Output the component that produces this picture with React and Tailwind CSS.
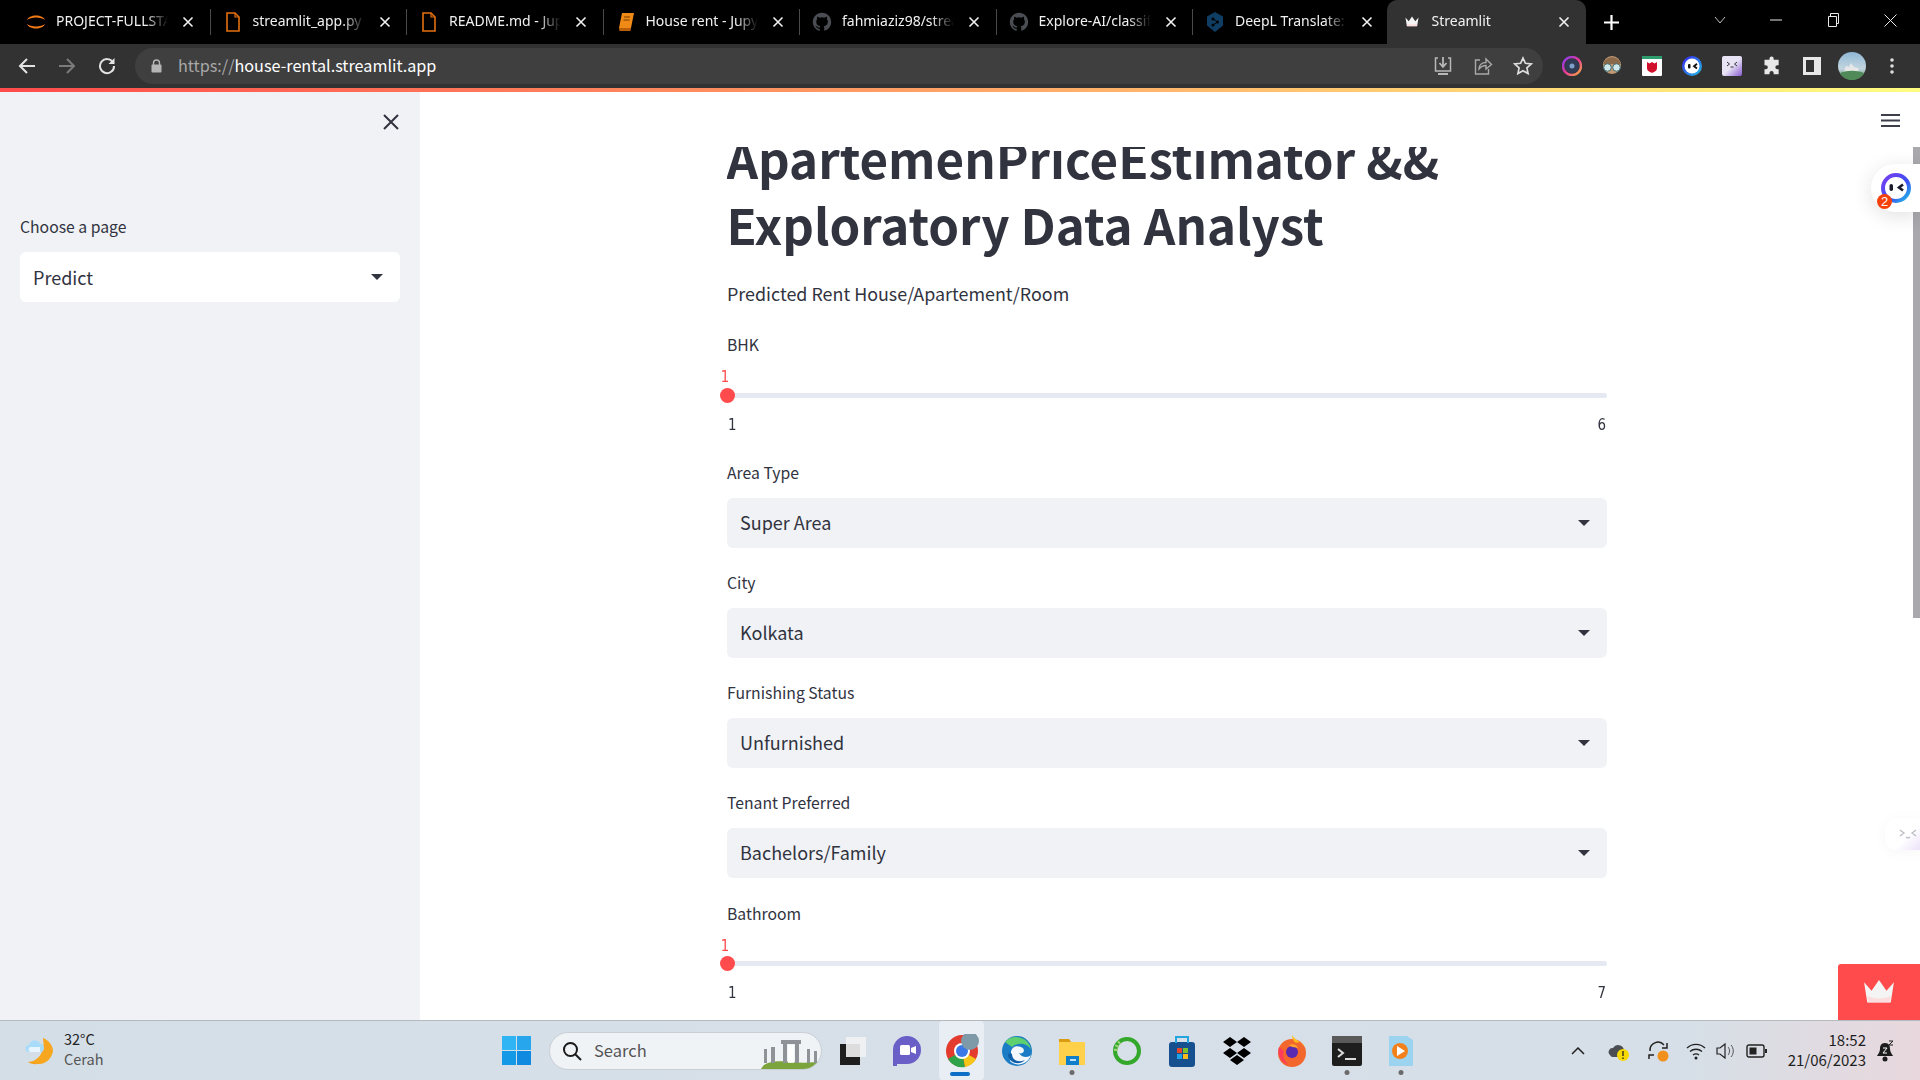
import React from "react";

const sans = "[font-family:'Noto_Sans_CJK_SC','Noto_Sans',sans-serif]";

function Tab({ icon, title, active, sep }) {
  return (
    <div className={"relative h-[44px] shrink-0 flex items-center pr-[12px] " + (active ? "bg-[#323232] rounded-t-[10px] w-[199px] ml-[-3px] pl-[15px]" : "w-[196.5px] pl-[12px]")}>
      <div className="w-[20px] h-[20px] flex items-center justify-center shrink-0">{icon}</div>
      <div className="ml-[10px] w-[112px] overflow-hidden whitespace-nowrap text-[14px] leading-[20px] mb-[2px] text-[#f1f1f1] font-['Noto_Sans'] [mask-image:linear-gradient(to_right,black_80%,transparent)]">{title}</div>
      <svg className="ml-[14px] shrink-0" width="12" height="12" viewBox="0 0 12 12"><path d="M1.500 1.500 10.500 10.500M10.500 1.500 1.500 10.500" stroke="#f2f2f2" strokeWidth="1.600" /></svg>
      {sep && <div className="absolute right-0 top-[9px] h-[26px] w-px bg-[#4a4a4a]" />}
    </div>
  );
}

const FileIcon = () => (
  <svg width="16" height="20" viewBox="0 0 16 20" fill="none"><path d="M2 1h8l4 4v14H2z" stroke="#e5700f" strokeWidth="1.600" /><path d="M10 1v4h4" stroke="#e5700f" strokeWidth="1.200" /></svg>
);
const BookIcon = () => (
  <svg width="18" height="20" viewBox="0 0 18 20"><path d="M5 1h12l-3 15H2z" fill="#ef8a17" /><path d="M2 16h12l-.6 3H2.500z" fill="#b85f08" /><path d="M7 5h6M6.500 8h6" stroke="#7a3d00" strokeWidth="1" /></svg>
);
const JupyterIcon = () => (
  <svg width="22" height="22" viewBox="0 0 22 22" fill="none"><path d="M1 9C3 2 19 2 21 9 17 5 5 5 1 9z" fill="#ef7a17" /><path d="M1 13c2 7 18 7 20 0-4 4-16 4-20 0z" fill="#ef7a17" /></svg>
);
const GithubIcon = () => (
  <svg width="20" height="20" viewBox="0 0 24 24" fill="#4a4d52"><path d="M12 1C5.900 1 1 5.900 1 12c0 4.900 3.200 9 7.500 10.500.6.100.8-.2.8-.5v-2c-3 .7-3.700-1.300-3.700-1.300-.5-1.300-1.200-1.600-1.200-1.600-1-.7.100-.7.100-.7 1.100.1 1.700 1.100 1.700 1.100 1 1.700 2.600 1.200 3.200.9.100-.7.400-1.200.7-1.500-2.400-.3-5-1.200-5-5.400 0-1.200.4-2.200 1.100-2.900-.1-.3-.5-1.400.1-2.900 0 0 .9-.3 3 1.100a10.500 10.500 0 0 1 5.500 0c2.100-1.400 3-1.100 3-1.100.6 1.500.2 2.600.1 2.900.7.7 1.100 1.700 1.100 2.900 0 4.200-2.600 5.100-5 5.400.4.300.7 1 .7 2v3c0 .3.200.6.800.5C19.800 21 23 16.900 23 12 23 5.900 18.100 1 12 1z" /></svg>
);
const DeepLIcon = () => (
  <svg width="18" height="22" viewBox="0 0 18 22"><path d="M9 1l8 4.500v9L9 21l-8-6.500v-9z" fill="#0f3d63" /><circle cx="7" cy="8" r="1.500" fill="#000" /><circle cx="11.500" cy="11" r="1.500" fill="#000" /><circle cx="7" cy="14" r="1.500" fill="#000" /><path d="M7 8l4.500 3L7 14" stroke="#000" strokeWidth="1" fill="none" /></svg>
);
const Crown = ({ w = 14, fill = "#f4f4f4" }) => (
  <svg width={w} height={w * 0.8} viewBox="0 0 30 24"><path d="M1 3l7 8 7-10 7 10 7-8-3 19H4z" fill={fill} /><path d="M4 16c6 3 16 3 22 0l-1 6H5z" fill="#ffd6d6" opacity=".75" /></svg>
);

function Toolbtn({ children, className = "" }) {
  return <div className={"w-[40px] h-[40px] shrink-0 flex items-center justify-center " + className}>{children}</div>;
}

function Chrome() {
  return (
    <div className="h-[88px] shrink-0 bg-black">
      <div className="h-[44px] flex items-end pl-[14px]">
        <Tab icon={<JupyterIcon />} title="PROJECT-FULLSTACK" sep />
        <Tab icon={<FileIcon />} title="streamlit_app.py - Jupyter" sep />
        <Tab icon={<FileIcon />} title="README.md - Jupyter" sep />
        <Tab icon={<BookIcon />} title="House rent - Jupyter" sep />
        <Tab icon={<GithubIcon />} title="fahmiaziz98/streamlit" sep />
        <Tab icon={<GithubIcon />} title="Explore-AI/classification" sep />
        <Tab icon={<DeepLIcon />} title="DeepL Translate: The" />
        <Tab icon={<Crown />} title="Streamlit" active />
        <svg className="ml-[17px] mb-[13px]" width="17" height="17" viewBox="0 0 17 17"><path d="M8.500 1v15M1 8.500h15" stroke="#fff" strokeWidth="2.200" /></svg>
        <div className="flex-1 flex items-center justify-end h-[44px] text-[#d0d0d0]">
          <svg className="mr-[44px] mb-[4px]" width="12" height="8" viewBox="0 0 12 8"><path d="M1 1l5 6 5-6" stroke="#bdbdbd" fill="none" /></svg>
          <svg className="mr-[45px] mb-[4px]" width="12" height="2" viewBox="0 0 12 2"><path d="M0 1h12" stroke="#e8e8e8" /></svg>
          <svg className="mr-[45px] mb-[4px]" width="12" height="14" viewBox="0 0 12 14" fill="none"><path d="M1.500 3.500h8v10h-8zM3.500 3.500v-3h8v10h-2" stroke="#e8e8e8" /></svg>
          <svg className="mr-[23px] mb-[4px]" width="13" height="13" viewBox="0 0 13 13"><path d="M.5.500l12 12M12.500.500l-12 12" stroke="#e8e8e8" /></svg>
        </div>
      </div>
      <div className="h-[44px] bg-[#323232] flex items-center pl-[7px] pr-[8px] pb-[1px]">
        <Toolbtn>
          <svg width="18" height="18" viewBox="0 0 18 18" fill="none"><path d="M17 9H2M9 2 2 9l7 7" stroke="#e3e3e3" strokeWidth="2" /></svg>
        </Toolbtn>
        <Toolbtn>
          <svg width="18" height="18" viewBox="0 0 18 18" fill="none"><path d="M1 9h15M9 2l7 7-7 7" stroke="#7b7b7b" strokeWidth="2" /></svg>
        </Toolbtn>
        <Toolbtn>
          <svg width="18" height="18" viewBox="0 0 18 18" fill="none"><path d="M15 5.500A7 7 0 1 0 16 9" stroke="#e3e3e3" strokeWidth="2" /><path d="M16.500 1v6h-6z" fill="#e3e3e3" /></svg>
        </Toolbtn>
        <div className="ml-[8px] w-[1409px] h-[36px] rounded-full bg-[#3f3f3f] flex items-center pl-[16px] pr-0">
          <svg width="11" height="14" viewBox="0 0 11 14"><path d="M2.500 6V4a3 3 0 0 1 6 0v2" stroke="#b5b5b5" strokeWidth="1.400" fill="none" /><rect x=".5" y="5.500" width="10" height="8" rx="1" fill="#b5b5b5" /></svg>
          <div className={"ml-[16px] mb-[2px] text-[16.200px] leading-[24px] text-white " + sans}><span className="text-[#a8a8a8]">https://</span>house-rental.streamlit.app</div>
          <div className="flex-1" />
          <Toolbtn>
            <svg width="20" height="20" viewBox="0 0 20 20" fill="none"><path d="M5 2H2.500v13h15V2H15" stroke="#b8b8b8" strokeWidth="1.500" /><path d="M10 1v9M6.500 7l3.500 4 3.500-4" stroke="#b8b8b8" strokeWidth="1.800" /><path d="M5 18h10" stroke="#b8b8b8" strokeWidth="2" /></svg>
          </Toolbtn>
          <Toolbtn>
            <svg width="20" height="20" viewBox="0 0 20 20" fill="none"><path d="M7 4H2.500v14h13v-5" stroke="#a9a9a9" strokeWidth="1.400" /><path d="M6 13c0-4 3-6.500 7-6.500V3l5.500 5.500L13 13v-3.500c-3 0-5 1-7 3.500z" stroke="#a9a9a9" strokeWidth="1.400" /></svg>
          </Toolbtn>
          <Toolbtn>
            <svg width="20" height="20" viewBox="0 0 24 24" fill="none"><path d="M12 2.500l2.900 6.300 6.900.8-5.100 4.700 1.400 6.800-6.100-3.400-6.100 3.400 1.400-6.800-5.100-4.700 6.900-.8z" stroke="#dedede" strokeWidth="2" /></svg>
          </Toolbtn>
        </div>
        <div className="flex-1 flex items-center justify-between pl-[9px]">
          <Toolbtn>
            <svg width="20" height="20" viewBox="0 0 20 20" fill="none"><defs><linearGradient id="ring" x1="0" y1="0" x2="1" y2="1"><stop offset="0" stopColor="#7a3df0" /><stop offset=".5" stopColor="#e8389a" /><stop offset="1" stopColor="#f2b13d" /></linearGradient></defs><circle cx="10" cy="10" r="9" stroke="url(#ring)" strokeWidth="2.500" /><circle cx="10" cy="10" r="7" fill="#2f3a55" /><circle cx="10" cy="10" r="2.500" fill="#7fa0c8" /></svg>
          </Toolbtn>
          <Toolbtn>
            <svg width="20" height="20" viewBox="0 0 20 20"><circle cx="10" cy="9" r="9" fill="#c29a72" /><path d="M1 8c3-9 15-9 18 0z" fill="#8a6a4a" /><circle cx="5.500" cy="11.500" r="3.800" fill="#cfe8ea" stroke="#3f6a70" /><circle cx="14.500" cy="11.500" r="3.800" fill="#cfe8ea" stroke="#3f6a70" /></svg>
          </Toolbtn>
          <Toolbtn>
            <svg width="20" height="20" viewBox="0 0 20 20"><rect x="0" y="0" width="20" height="20" rx="1" fill="#fff" /><rect x="0" y="0" width="20" height="3" fill="#2e9d6d" /><path d="M5 6l2.500 1.500L10 6l2.500 1.500L15 6v6c0 3-3 4-5 5-2-1-5-2-5-5z" fill="#d0102a" /></svg>
          </Toolbtn>
          <Toolbtn>
            <svg width="20" height="20" viewBox="0 0 20 20"><defs><linearGradient id="ext2" x1="0" y1="0" x2="1" y2="1"><stop offset="0" stopColor="#3a20f0" /><stop offset="1" stopColor="#22c3e6" /></linearGradient></defs><circle cx="10" cy="10" r="10" fill="url(#ext2)" /><circle cx="10" cy="10" r="7.500" fill="#fff" /><rect x="6" y="8" width="2.500" height="4.500" rx="1" fill="#111" /><path d="M15 7.800 12 10.200l3 2.300" stroke="#111" strokeWidth="1.800" fill="none" /></svg>
          </Toolbtn>
          <Toolbtn>
            <svg width="20" height="20" viewBox="0 0 20 20"><defs><linearGradient id="ext3" x1="0" y1="0" x2="1" y2="1"><stop offset=".5" stopColor="#e8e4f6" /><stop offset="1" stopColor="#8a5cd0" /></linearGradient></defs><rect x="0" y="0" width="20" height="20" rx="2" fill="url(#ext3)" /><path d="M5 6l2.500 2L5 10M15 6l-2.500 2 2.500 2M8.500 11h3" stroke="#333" fill="none" /></svg>
          </Toolbtn>
          <Toolbtn>
            <svg width="20" height="20" viewBox="0 0 24 24" fill="#e8e8e8"><path d="M9 3a2.500 2.500 0 0 1 5 0v1.500h6V11h-1.500a2.500 2.500 0 0 0 0 5H20v6h-6v-1.500a2.500 2.500 0 0 0-5 0V22H3v-6h1.500a2.500 2.500 0 0 0 0-5H3V4.500h6z" /></svg>
          </Toolbtn>
          <Toolbtn>
            <svg width="18" height="18" viewBox="0 0 18 18" fill="none"><rect x="1.500" y="1.500" width="15" height="15" stroke="#e8e8e8" strokeWidth="3" /><rect x="11" y="2" width="5" height="14" fill="#e8e8e8" /></svg>
          </Toolbtn>
          <Toolbtn>
            <svg width="28" height="28" viewBox="0 0 28 28"><defs><linearGradient id="sky" x1="0" y1="0" x2="0" y2="1"><stop offset="0" stopColor="#8fb8d6" /><stop offset=".6" stopColor="#c3d5df" /><stop offset="1" stopColor="#4f8a58" /></linearGradient></defs><circle cx="14" cy="14" r="14" fill="url(#sky)" /><path d="M6 20l2-6 3 1 2-4 3 4 4 1 1 4z" fill="#e6e8e8" /><path d="M2 21c7-3 17-3 24 0-3 5-8 7-12 7s-9-2-12-7z" fill="#4f8a58" /></svg>
          </Toolbtn>
          <Toolbtn>
            <svg width="4" height="16" viewBox="0 0 4 16" fill="#dedede"><circle cx="2" cy="2" r="1.800" /><circle cx="2" cy="8" r="1.800" /><circle cx="2" cy="14" r="1.800" /></svg>
          </Toolbtn>
        </div>
      </div>
    </div>
  );
}

function Caret() {
  return <svg width="12" height="6" viewBox="0 0 12 6"><path d="M0 0h12L6 6z" fill="#31333f" /></svg>;
}

function Select({ value, bg = "bg-[#f0f2f6]" }) {
  return (
    <div className={"h-[50px] rounded-[6px] flex items-center justify-between pl-[13px] pr-[17px] text-[18px] text-[#31333f] " + bg}>
      <span>{value}</span>
      <Caret />
    </div>
  );
}

function Field({ label, value }) {
  return (
    <div className="mt-[23px]">
      <div className="h-[24px] leading-[24px] text-[15.750px] text-[#31333f]">{label}</div>
      <div className="mt-[13px]"><Select value={value} /></div>
    </div>
  );
}

function Slider({ label, max }) {
  return (
    <div className="pb-[1px]">
      <div className="h-[24px] leading-[24px] text-[15.750px] text-[#31333f]">{label}</div>
      <div className="relative mt-[12px] h-[23.500px]">
        <div className="absolute left-[-7px] top-[-4px] text-[#ff4b4b] text-[15.750px] leading-[24px] font-['DejaVu_Sans'] scale-x-[.85]">1</div>
      </div>
      <div className="relative h-[5px] rounded-full bg-[#e6e9f1]">
        <div className="absolute left-[-7.500px] top-[-5px] w-[15px] h-[15px] rounded-full bg-[#ff4b4b]" />
      </div>
      <div className="mt-[15px] flex justify-between pl-[1px] pr-[1px] text-[15.750px] leading-[24px] text-[#31333f] font-['DejaVu_Sans']">
        <span className="scale-x-[.85] origin-left">1</span><span className="scale-x-[.85] origin-right">{max}</span>
      </div>
    </div>
  );
}

function Sidebar() {
  return (
    <aside className="w-[420px] shrink-0 bg-[#f0f2f6] pl-[20px] pr-[20px]">
      <div className="flex justify-end pt-[22px] pr-[1px]">
        <svg width="16" height="16" viewBox="0 0 16 16"><path d="M1 1l14 14M15 1 1 15" stroke="#31333f" strokeWidth="2" /></svg>
      </div>
      <div className="mt-[85px] h-[24px] leading-[24px] text-[15.750px] text-[#31333f]">Choose a page</div>
      <div className="mt-[13px]"><Select value="Predict" bg="bg-white" /></div>
    </aside>
  );
}

function Main() {
  return (
    <main className="relative flex-1 bg-white overflow-hidden">
      <div className="h-[55px] flex justify-end pr-[20px] pt-[22px]">
        <svg width="19" height="13" viewBox="0 0 19 13"><path d="M0 1h19M0 6.500h19M0 12h19" stroke="#3c3e4a" strokeWidth="2" /></svg>
      </div>
      <div className="ml-[307px] w-[880px]">
        <div className="h-[111px] overflow-hidden">
          <h1 className="mt-[-22px] ml-[-0.500px] text-[49.250px] leading-[66px] font-bold text-[#31333f] whitespace-nowrap">ApartemenPriceEstimator &amp;&amp;<br />Exploratory Data Analyst</h1>
        </div>
        <p className="mt-[21px] h-[28px] leading-[28px] text-[17.900px] text-[#31333f]">Predicted Rent House/Apartement/Room</p>
        <div className="mt-[26px]"><Slider label="BHK" max="6" /></div>
        <Field label="Area Type" value="Super Area" />
        <Field label="City" value="Kolkata" />
        <Field label="Furnishing Status" value="Unfurnished" />
        <Field label="Tenant Preferred" value="Bachelors/Family" />
        <div className="mt-[24px]"><Slider label="Bathroom" max="7" /></div>
      </div>
      <div className="absolute right-0 top-[55px] w-[7px] h-[471px] bg-[#a8a8ad]" />
      <div className="absolute right-0 top-[72px] w-[49px] h-[48px] bg-white rounded-l-[24px] shadow-[0_4px_20px_rgba(0,0,0,0.12)] flex items-center pl-[10px]">
        <div className="relative">
          <svg width="30" height="30" viewBox="0 0 30 30"><defs><linearGradient id="chat" x1="0" y1="0" x2="1" y2="1"><stop offset="0" stopColor="#7a3df0" /><stop offset=".6" stopColor="#3a50f0" /><stop offset="1" stopColor="#22c3e6" /></linearGradient></defs><circle cx="15" cy="15" r="13" fill="none" stroke="url(#chat)" strokeWidth="4" /><rect x="8.500" y="11" width="3.500" height="7" rx="1.700" fill="#1a1a2a" /><path d="M22 11.500 18 14.500l4 3" stroke="#1a1a2a" strokeWidth="2.600" fill="none" /></svg>
          <div className="absolute left-[-4px] bottom-[-6px] w-[15px] h-[15px] rounded-full bg-[#f6410c] text-white text-[13px] leading-[15px] text-center font-['Liberation_Sans']">2</div>
        </div>
      </div>
      <div className="absolute right-0 top-[726px] w-[35px] h-[32px] bg-[linear-gradient(135deg,#ffffff_60%,#ece2fa)] rounded-l-[12px] shadow-[0_2px_14px_rgba(0,0,0,0.04)] flex items-center pl-[14px]">
        <svg width="18" height="12" viewBox="0 0 18 12" fill="none"><path d="M1 2l4 3-4 3M17 2l-4 3 4 3M7 9c1 1 3 1 4 0" stroke="#b8bcc2" strokeWidth="1.300" /></svg>
      </div>
      <div className="absolute right-0 bottom-0 w-[82px] h-[56px] bg-[#ff4b4b] rounded-tl-[3px] flex items-center justify-center">
        <Crown w={32} />
      </div>
    </main>
  );
}

function App_({ children, className = "" }) {
  return <div className={"w-[45px] h-[59px] shrink-0 flex items-center justify-center relative " + className}>{children}</div>;
}
const Dot = () => <div className="absolute bottom-[5px] left-1/2 -translate-x-1/2 w-[5px] h-[5px] rounded-full bg-[#6b6b6b]" />;

function Taskbar() {
  return (
    <footer className="h-[60px] shrink-0 border-t border-[#b4bac0] bg-[linear-gradient(90deg,#d4dee7_0%,#d7e0e8_50%,#d6dfe7_88%,#e8d8dd_100%)] flex items-center relative">
      <div className="w-[502px] flex items-center pl-[25px] shrink-0">
        <svg width="30" height="30" viewBox="0 0 30 30"><path d="M18 2a14 14 0 1 1-15 24C13 27 22 16 18 2z" fill="#f39a1f" /><path d="M18 2c6 2 10 8 10 13-1 7-7 13-14 13-4 0-8-1-11-2 10 0 18-11 15-24z" fill="#f6a61f" /><path d="M4 16a3.500 3.500 0 0 1 0-7 6 6 0 0 1 11-1.500 4.500 4.500 0 0 1 1.500 8.500z" fill="#a8dcf9" /><path d="M5 16a3 3 0 0 1 0-5h10v5z" fill="#e8f5fc" /></svg>
        <div className={"ml-[9px] mb-[3px] text-[14.500px] leading-[20px] text-[#222] " + sans}>
          <div>32°C</div>
          <div className="text-[#555]">Cerah</div>
        </div>
      </div>
      <svg width="29" height="29" viewBox="0 0 29 29"><rect width="14" height="14" fill="#2fb4f4" /><rect x="15" width="14" height="14" fill="#27a6ee" /><rect y="15" width="14" height="14" fill="#1499e6" /><rect x="15" y="15" width="14" height="14" fill="#0f8ae0" /></svg>
      <div className="ml-[18px] w-[273px] h-[38px] rounded-full bg-[#f0f3f6] border border-[#c9cfd5] flex items-center pl-[12px] relative overflow-hidden">
        <svg width="20" height="20" viewBox="0 0 20 20" fill="none"><circle cx="8.500" cy="8.500" r="6.500" stroke="#1a1a1a" strokeWidth="2" /><path d="M13 13l6 6" stroke="#1a1a1a" strokeWidth="2" /></svg>
        <span className={"ml-[12px] text-[16.500px] text-[#555] " + sans}>Search</span>
        <svg className="absolute right-0 top-[6px]" width="60" height="30" viewBox="0 0 60 30"><path d="M0 30c4-9 20-8 30-7s22 1 30-1v8z" fill="#7da33c" /><g fill="#8f9296"><rect x="3" y="10" width="3" height="14" /><rect x="10" y="8" width="4" height="16" /><rect x="20" y="1" width="20" height="4" /><rect x="22" y="5" width="4" height="19" /><rect x="34" y="5" width="4" height="19" /><rect x="46" y="10" width="3" height="14" /><rect x="53" y="12" width="3" height="12" /></g><rect x="27" y="6" width="6" height="18" fill="#ffffff" opacity=".85" /></svg>
      </div>
      <div className="ml-[6px] flex items-center">
        <App_>
          <svg className="ml-[3px]" width="30" height="30" viewBox="0 0 30 30"><rect x="3" y="8" width="20" height="21" fill="#1e1e1e" /><rect x="9" y="1" width="20" height="20" fill="#f2f2f2" fillOpacity=".9" /></svg>
        </App_>
        <App_ className="ml-[11px]">
          <svg width="30" height="32" viewBox="0 0 30 32"><path d="M15 1a14 14 0 0 1 14 14 14 14 0 0 1-14 14H5v2H1V15A14 14 0 0 1 15 1z" fill="#6a5ec7" /><rect x="8" y="10" width="10" height="10" rx="1.500" fill="#fff" /><path d="M19 13l5-2v8l-5-2z" fill="#fff" /></svg>
        </App_>
        <App_ className="ml-[10px] bg-[#e8eef3] rounded-[4px]">
          <svg width="34" height="34" viewBox="0 0 34 34"><circle cx="17" cy="17" r="16" fill="#e33b2e" /><path d="M17 17 3 25a16 16 0 0 0 17 8z" fill="#2fa24a" /><path d="M17 17 31 25a16 16 0 0 1-11 8l-3-16z" fill="#f5c518" /><circle cx="17" cy="17" r="8" fill="#fff" /><circle cx="17" cy="17" r="6" fill="#3b78e7" /><circle cx="25" cy="7" r="9" fill="#7e9aa8" /></svg>
          <div className="absolute bottom-[4px] left-[11px] w-[20px] h-[4px] rounded-full bg-[#0f6fc6]" />
        </App_>
        <App_ className="ml-[10px]">
          <svg width="30" height="30" viewBox="0 0 30 30"><circle cx="15" cy="15" r="15" fill="#1a7cc4" /><path d="M3 6a15 15 0 0 1 26 8c-2-6-12-9-19-3z" fill="#5ed06f" /><path d="M9 17c0-6 5-8 10-6s3 8-2 6c4 6 10 4 12 2-3 9-13 12-20 7-2-2-1-5 0-9z" fill="#fff" opacity=".95" /><path d="M10 18c0 6 6 9 13 6-6 6-15 3-17-4 0-3 2-4 4-2z" fill="#0f5ea8" /></svg>
        </App_>
        <App_ className="ml-[10px]">
          <svg width="30" height="32" viewBox="0 0 30 32"><path d="M2 4h10l2 3h14v23H2z" fill="#ffd04a" /><path d="M2 4h10l2 3H2z" fill="#d99c12" /><rect x="9" y="21" width="13" height="9" fill="#0f7fcb" /><rect x="13" y="24" width="6" height="2" fill="#bfe0f5" /></svg>
          <Dot />
        </App_>
        <App_ className="ml-[10px]">
          <svg width="30" height="30" viewBox="0 0 30 30" fill="none"><circle cx="15" cy="15" r="12" stroke="#34a82b" strokeWidth="4" /><path d="M8 6a12 12 0 0 0-4 10" stroke="#9ad37a" strokeWidth="4" strokeDasharray="2 2" /></svg>
        </App_>
        <App_ className="ml-[10px]">
          <svg width="28" height="32" viewBox="0 0 28 32"><rect x="1" y="7" width="26" height="25" rx="3" fill="#17508f" /><path d="M8 8V2h12v6" stroke="#25a5e0" strokeWidth="2" fill="none" /><rect x="9" y="13" width="5" height="5" fill="#e8462c" /><rect x="15" y="13" width="5" height="5" fill="#7cc02c" /><rect x="9" y="19" width="5" height="5" fill="#1ea3e6" /><rect x="15" y="19" width="5" height="5" fill="#f9b81c" /></svg>
        </App_>
        <App_ className="ml-[10px]">
          <svg width="30" height="28" viewBox="0 0 30 28" fill="#000"><path d="M8 0l7 5-7 5-7-5zM22 0l7 5-7 5-7-5zM8 11l7 5-7 5-7-5zM22 11l7 5-7 5-7-5zM15 18l7 5-7 5-7-5z" /></svg>
        </App_>
        <App_ className="ml-[10px]">
          <svg width="30" height="32" viewBox="0 0 30 32"><circle cx="15" cy="18" r="14" fill="#f3662c" /><path d="M15 0c3 5 9 7 13 12C26 8 21 6 19 8c-3-2-4-5-4-8z" fill="#ffc01e" /><path d="M2 12c-2 8 2 16 10 18-5-4-7-9-5-14z" fill="#ff3d5a" /><circle cx="15" cy="17" r="6" fill="#5a2bb0" /><path d="M12 10c4-2 8 0 9 3-3-1-6 0-9-3z" fill="#ffa42d" /></svg>
        </App_>
        <App_ className="ml-[10px]">
          <svg width="30" height="30" viewBox="0 0 30 30"><rect width="30" height="30" rx="2" fill="#1e1e1e" /><rect width="30" height="7" fill="#5a5a5a" /><path d="M6 13l5 4-5 4" stroke="#ddd" strokeWidth="2" fill="none" /><path d="M13 23h11" stroke="#ddd" strokeWidth="2" /></svg>
          <Dot />
        </App_>
        <App_ className="ml-[9px]">
          <svg width="26" height="32" viewBox="0 0 26 32"><path d="M1 1h18l6 4v26H1z" fill="#9cd3ee" /><circle cx="12" cy="16" r="8" fill="#f2811c" /><path d="M9 11l8 5-8 5z" fill="#fff" /></svg>
          <Dot />
        </App_>
      </div>
      <div className="absolute right-0 top-0 h-[59px] flex items-center pr-[25px]">
        <svg width="14" height="8" viewBox="0 0 14 8" fill="none"><path d="M1 7l6-6 6 6" stroke="#222" strokeWidth="1.500" /></svg>
        <svg className="ml-[23px]" width="22" height="22" viewBox="0 0 22 22"><path d="M2 15a4 4 0 0 1 3-7 6 6 0 0 1 11 2v7H5a3 3 0 0 1-3-2z" fill="#4a4d52" /><circle cx="15" cy="15" r="6" fill="#f7d800" /><path d="M15 11v5M15 17.500v1.500" stroke="#222" strokeWidth="1.300" /></svg>
        <svg className="ml-[17px]" width="24" height="24" viewBox="0 0 24 24" fill="none"><path d="M3 12a8 8 0 0 1 14-6M20 4v5h-5M2 20v-4h5" stroke="#222" strokeWidth="1.500" /><circle cx="16" cy="17" r="5.500" fill="#f2901c" /></svg>
        <svg className="ml-[15px]" width="20" height="18" viewBox="0 0 20 18" fill="none"><path d="M1 6a13 13 0 0 1 18 0M4 9.500a9 9 0 0 1 12 0M7 13a5 5 0 0 1 6 0" stroke="#222" strokeWidth="1.400" /><circle cx="10" cy="16" r="1.500" fill="#222" /></svg>
        <svg className="ml-[10px]" width="18" height="18" viewBox="0 0 18 18" fill="none"><path d="M1 6h3l5-4v14l-5-4H1z" stroke="#222" strokeWidth="1.200" /><path d="M12 5c2 2 2 6 0 8M15 3c3 3 3 9 0 12" stroke="#555" /></svg>
        <svg className="ml-[12px]" width="21" height="14" viewBox="0 0 21 14" fill="none"><rect x="1" y="1" width="17" height="12" rx="2" stroke="#222" strokeWidth="1.400" /><rect x="3.500" y="3.500" width="7" height="7" fill="#222" /><rect x="19" y="5" width="2" height="4" fill="#222" /></svg>
        <div className={"ml-[21px] mb-[2px] text-right text-[15px] leading-[20px] text-[#1f1f1f] " + sans}>
          <div>18:52</div>
          <div>21/06/2023</div>
        </div>
        <svg className="ml-[10px]" width="19" height="22" viewBox="0 0 19 22"><path d="M9 3c-4 0-5 3-5 6 0 3-2 5-3 7h16c-1-2-3-4-3-7 0-3-1-6-5-6z" fill="#1c1c1c" /><circle cx="9" cy="19" r="2.500" fill="#1c1c1c" /><path d="M7 8h4l-4 5h4" stroke="#fff" fill="none" /><path d="M13 1h4l-4 4h4" stroke="#1c1c1c" fill="none" /></svg>
      </div>
    </footer>
  );
}

export default function App() {
  return (
    <div className={"w-[1920px] h-[1080px] overflow-hidden flex flex-col bg-white " + sans}>
      <Chrome />
      <div className="h-[4px] shrink-0 bg-[linear-gradient(90deg,#ff4b4b,#fffd80)]" />
      <div className="flex-1 flex min-h-0">
        <Sidebar />
        <Main />
      </div>
      <Taskbar />
    </div>
  );
}
